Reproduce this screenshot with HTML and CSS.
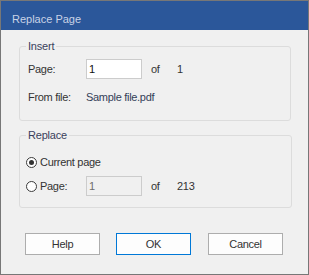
FILE: index.html
```html
<!DOCTYPE html>
<html>
<head>
<meta charset="utf-8">
<link rel="stylesheet" href="styles.css">
</head>
<body>
<div class="window">
  <div class="titlebar">Replace Page</div>
  <div class="content">
    <fieldset class="group group-insert">
      <legend>Insert</legend>
      <div class="row row-first">
        <span class="label">Page:</span>
        <span class="field">1</span>
        <span class="of">of</span>
        <span class="total">1</span>
      </div>
      <div class="row row-second">
        <span class="label">From file:</span>
        <span class="value">Sample file.pdf</span>
      </div>
    </fieldset>
    <fieldset class="group group-replace">
      <legend>Replace</legend>
      <div class="row radio-row row-first">
        <span class="radio checked"></span>
        <span>Current page</span>
      </div>
      <div class="row radio-row row-radio2">
        <span class="radio"></span>
        <span class="label label-short">Page:</span>
        <span class="field disabled">1</span>
        <span class="of">of</span>
        <span class="total">213</span>
      </div>
    </fieldset>
    <div class="buttons">
      <button class="btn">Help</button>
      <button class="btn btn-default">OK</button>
      <button class="btn btn-last">Cancel</button>
    </div>
  </div>
</div>
</body>
</html>
```
FILE: styles.css
```css
html, body {
  margin: 0;
  padding: 0;
  background: #f0f0f0;
}

.window {
  width: 309px;
  height: 275px;
  box-sizing: border-box;
  border: 1px solid #777777;
  background: #f0f0f0;
  font-family: "Liberation Sans", Arial, sans-serif;
  font-size: 11px;
  line-height: 13px;
  color: #333333;
  display: flex;
  flex-direction: column;
}

.titlebar {
  height: 29px;
  box-sizing: border-box;
  background: #2b579a;
  color: #c9d3e6;
  font-size: 11px;
  line-height: 13px;
  padding: 12px 0 0 11px;
}

.content {
  padding: 10px 0 0 18px;
}

.group {
  width: 272px;
  box-sizing: border-box;
  margin: 0;
  padding: 0;
  border: 1px solid #dcdcdc;
  border-radius: 3px;
  min-width: 0;
}

.group legend {
  margin-left: 6px;
  padding: 0 2px;
  line-height: 13px;
  color: #3a3f5c;
  letter-spacing: -0.2px;
}

.group-insert {
  padding-bottom: 13px;
}

.group-replace {
  margin-top: 8px;
  width: 273px;
  padding-bottom: 11px;
}

.row {
  display: flex;
  align-items: center;
  height: 20px;
  padding-left: 8px;
  letter-spacing: -0.3px;
}

.row-first {
  margin-top: 6px;
}

.row-second {
  margin-top: 8px;
}

.group-replace .row-first {
  margin-top: 10px;
}

.row-radio2 {
  margin-top: 4px;
}

.radio-row {
  padding-left: 6px;
}

.label {
  width: 58px;
  flex: none;
}

.label-short {
  width: 46px;
}

.field {
  width: 56px;
  height: 20px;
  box-sizing: border-box;
  border: 1px solid #cccccc;
  background: #ffffff;
  color: #111111;
  padding-left: 2px;
  display: flex;
  align-items: center;
  flex: none;
}

.field.disabled {
  background: #f0f0f0;
  color: #6d6d6d;
}

.of {
  margin-left: 9px;
  width: 26px;
  flex: none;
}

.value {
  color: #334058;
}

.radio {
  width: 11px;
  height: 11px;
  box-sizing: border-box;
  border: 1px solid #3c3c3c;
  border-radius: 50%;
  background: #ffffff;
  margin-right: 3px;
  flex: none;
  display: flex;
  align-items: center;
  justify-content: center;
}

.radio.checked::after {
  content: "";
  width: 5px;
  height: 5px;
  border-radius: 50%;
  background: #333333;
}

.buttons {
  display: flex;
  gap: 16px;
  margin-top: 25px;
  padding-left: 6px;
}

.btn {
  width: 75px;
  height: 22px;
  box-sizing: border-box;
  border: 1px solid #adadad;
  background: #fdfdfd;
  font-family: "Liberation Sans", Arial, sans-serif;
  font-size: 11px;
  color: #333333;
  padding: 0;
  letter-spacing: -0.3px;
}

.btn-default {
  border-color: #0078d7;
}

.btn-last {
  margin-left: 1px;
}
```
